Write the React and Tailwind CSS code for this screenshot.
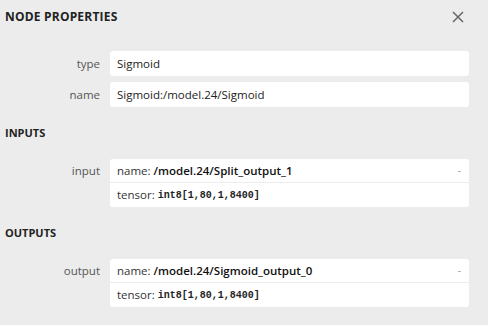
const Field = ({ label, value }) => (
  <div className="flex items-start">
    <div className="w-[110px] shrink-0 pr-[10px] text-right leading-[25px] text-[#555]">{label}</div>
    <div className="w-[359px] h-[25px] rounded-[3px] bg-white px-[7px] leading-[25px] text-[#222]">{value}</div>
  </div>
)

const Arg = ({ label, name, tensor }) => (
  <div className="flex items-start">
    <div className="w-[110px] shrink-0 pr-[10px] text-right leading-[24px] text-[#555]">{label}</div>
    <div className="w-[359px] rounded-[3px] bg-white">
      <div className="flex h-[24px] items-center justify-between border-b border-[#ececec] px-[7px]">
        <div className="text-[#333]">
          name: <span className="font-semibold text-[#111]">{name}</span>
        </div>
        <span className="pr-[1px] text-[10px] text-[#999]">-</span>
      </div>
      <div className="flex h-[24px] items-center px-[7px] text-[#333]">
        tensor:&nbsp;<span className="font-['Liberation_Mono',monospace] text-[10px] font-bold text-[#222]">{tensor}</span>
      </div>
    </div>
  </div>
)

const SectionTitle = ({ children }) => (
  <div className="flex h-[52px] items-center px-[5px] text-[11px] font-bold text-[#222]">{children}</div>
)

export default function App() {
  return (
    <div className="h-[325px] w-[488px] overflow-hidden bg-[#ececec] font-['Open_Sans',sans-serif] text-[11.5px]">
      <div className="flex h-[33px] items-center justify-between pl-[5px] pr-[24px]">
        <div className="text-[12px] font-bold tracking-[0.2px] text-[#222]">NODE PROPERTIES</div>
        <svg width="12" height="12" viewBox="0 0 12 12" className="text-[#666]">
          <path d="M1 1L11 11M11 1L1 11" stroke="currentColor" strokeWidth="1.5" />
        </svg>
      </div>
      <div className="flex flex-col gap-[6px] pt-[18px]">
        <Field label="type" value="Sigmoid" />
        <Field label="name" value="Sigmoid:/model.24/Sigmoid" />
      </div>
      <SectionTitle>INPUTS</SectionTitle>
      <Arg label="input" name="/model.24/Split_output_1" tensor="int8[1,80,1,8400]" />
      <SectionTitle>OUTPUTS</SectionTitle>
      <Arg label="output" name="/model.24/Sigmoid_output_0" tensor="int8[1,80,1,8400]" />
    </div>
  )
}
